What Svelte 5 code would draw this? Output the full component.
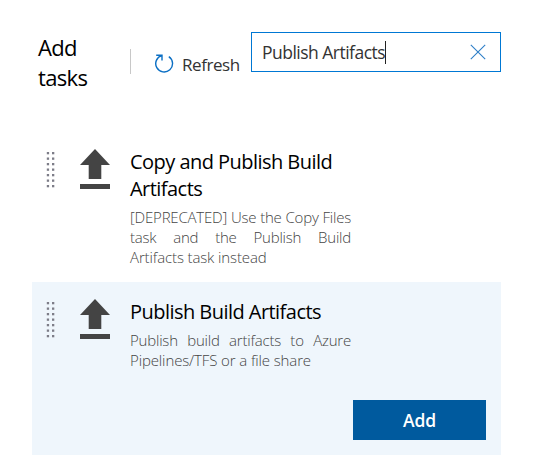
<script>
  const tasks = [
    {
      title: ['Copy and Publish Build', 'Artifacts'],
      lines: ['[DEPRECATED] Use the Copy Files', 'task and the Publish Build', 'Artifacts task instead'],
      selected: false
    },
    {
      title: ['Publish Build Artifacts'],
      lines: ['Publish build artifacts to Azure', 'Pipelines/TFS or a file share'],
      selected: true
    }
  ];
  const rows = [0, 1, 2, 3, 4, 5, 6];
</script>

<div class="panel">
  <header>
    <h1><span>Add</span><span>tasks</span></h1>
    <div class="divider"></div>
    <button class="refresh">
      <svg width="20" height="20" viewBox="0 0 20 20" fill="none" stroke="#0b6fc4" stroke-width="1.4">
        <path d="M2.2 2.3H8V7.6M7.9 2.5A8.4 8.4 0 1 0 14.8 3.6" />
      </svg>
      <span>Refresh</span>
    </button>
    <div class="search">
      <span class="query">Publish Artifacts</span><span class="caret"></span>
      <svg width="16" height="16" viewBox="0 0 16 16" stroke="#2f7fc8" stroke-width="1.1">
        <path d="M.8 .8L15.2 15.2M15.2 .8L.8 15.2" />
      </svg>
    </div>
  </header>

  {#each tasks as task}
    <section class:selected={task.selected}>
      <div class="body">
        <svg class="grip" width="9" height="36" viewBox="0 0 9 36" fill="#7d7d88">
          {#each rows as r}
            <rect x="0.8" y={r * 5.5} width="2.3" height="2.3" />
            <rect x="6" y={r * 5.5} width="2.3" height="2.3" />
          {/each}
        </svg>
        <svg class="upload" width="30" height="40" viewBox="0 0 30 40" fill="#444">
          <path d="M15 0L30 16H21.3V30H8.7V16H0ZM0 35H30V40H0Z" />
        </svg>
        <div class="text">
          <h2>{#each task.title as line}<span>{line}</span>{/each}</h2>
          <p>{#each task.lines as line}<span>{line}</span>{/each}</p>
        </div>
      </div>
      {#if task.selected}
        <button class="add">Add</button>
      {/if}
    </section>
  {/each}
</div>

<style>
  :global(body) { background: #fff; }
  .panel {
    box-sizing: border-box;
    width: 556px;
    height: 463px;
    padding: 32px 55px 8px 32px;
    font-family: "Segoe UI", "Open Sans", "Noto Sans", sans-serif;
    color: #000;
    overflow: hidden;
  }
  button { border: 0; padding: 0; font-family: inherit; background: none; }
  header { display: flex; align-items: flex-start; height: 100px; }
  h1 {
    margin: 0 0 0 6px;
    width: 92px;
    font-size: 22px;
    line-height: 30px;
    font-weight: 400;
    letter-spacing: -0.65px;
  }
  h1 span { display: block; }
  .divider { width: 1px; height: 25px; margin-top: 17px; background: #c8c8c8; }
  .refresh { display: flex; width: 97px; margin: 21px 0 0 23px; color: #333; }
  .refresh svg { flex: none; margin-right: 8px; }
  .refresh span { font-size: 17px; line-height: 24px; letter-spacing: -0.45px; white-space: nowrap; }
  .search {
    box-sizing: border-box;
    display: flex;
    align-items: center;
    width: 250px;
    height: 40px;
    padding: 0 14px 0 10px;
    border: 1px solid #0078d4;
    color: #333;
  }
  .query { font-size: 17.5px; letter-spacing: -0.52px; white-space: nowrap; }
  .caret { width: 1px; height: 23px; background: #222; }
  .search svg { margin-left: auto; }
  section { box-sizing: border-box; height: 150px; padding: 17px 15px 15px 14px; }
  section.selected {
    display: flex;
    flex-direction: column;
    justify-content: space-between;
    height: 173px;
    background: #eff6fc;
  }
  .body { display: flex; align-items: flex-start; }
  .grip { flex: none; margin: 3px 25px 0 0; }
  .upload { flex: none; margin-right: 20px; }
  .text { width: 221px; margin-top: -1px; }
  h2 { margin: 0; font-size: 20px; line-height: 27px; font-weight: 400; letter-spacing: -0.54px; }
  p { margin: 5px 0 0; font-size: 15px; line-height: 20px; font-weight: 300; color: #444; letter-spacing: -0.12px; }
  h2 span, p span { display: block; white-space: nowrap; }
  p span { text-align-last: justify; letter-spacing: -0.2px; }
  p span:last-child { text-align-last: left; letter-spacing: -0.12px; }
  .add {
    align-self: flex-end;
    width: 133px;
    height: 40px;
    background: #005a9e;
    color: #fff;
    font-size: 17.5px;
    letter-spacing: -0.2px;
    font-weight: 600;
  }
</style>
